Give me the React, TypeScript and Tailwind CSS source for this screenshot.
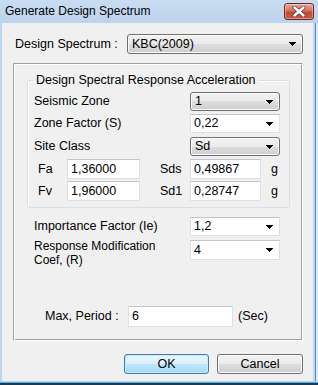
import React from 'react'

const ui = "font-['Liberation_Sans',Arial,sans-serif] text-[12.5px] text-black"

function Arrow() {
  return (
    <svg width="7" height="4" viewBox="0 0 7 4" className="shrink-0">
      <rect x="0" y="0" width="7" height="1" fill="#000" />
      <rect x="1" y="1" width="5" height="1" fill="#000" />
      <rect x="2" y="2" width="3" height="1" fill="#000" />
      <rect x="3" y="3" width="1" height="1" fill="#000" />
    </svg>
  )
}

// read-only drop list, drawn like a Win7 button
function DropList({ value, w, h = 19 }: { value: string; w: number; h?: number }) {
  return (
    <div
      style={{ width: w, height: h }}
      className="flex items-center justify-between pl-[4px] pr-[6px] border border-[#707070] rounded-[3px] bg-[linear-gradient(to_bottom,#f2f2f2,#ebebeb_50%,#dddddd_50%,#cfcfcf)] shadow-[inset_0_0_0_1px_#fcfcfc]"
    >
      <span className="leading-none">{value}</span>
      <Arrow />
    </div>
  )
}

// editable combo: white field with a bare arrow
function Combo({ value, w, h = 19 }: { value: string; w: number; h?: number }) {
  return (
    <div
      style={{ width: w, height: h }}
      className="flex items-center justify-between pl-[3px] pr-[6px] bg-white border border-[#dde1e6] border-t-[#c2c6cc]"
    >
      <span className="leading-none">{value}</span>
      <Arrow />
    </div>
  )
}

function Field({ value, w, h = 20 }: { value: string; w: number; h?: number }) {
  return (
    <div
      style={{ width: w, height: h }}
      className="flex items-center pl-[3px] bg-white border border-[#dde1e6] border-t-[#c2c6cc]"
    >
      <span className="leading-none">{value}</span>
    </div>
  )
}

function CloseButton() {
  return (
    <div className="mt-[3px] mr-[4px] w-[30px] h-[17px] rounded-[3px] border border-[#6d2a22] bg-[linear-gradient(to_bottom,#e7a99c,#d2715f_45%,#c24a33_55%,#c85a45)] shadow-[inset_0_0_0_1px_rgba(255,255,255,0.35)] flex items-center justify-center">
      <svg width="14" height="11" viewBox="0 0 14 11">
        <path d="M2.5 1.5 L11.5 9.5 M11.5 1.5 L2.5 9.5" stroke="#5a3a36" strokeWidth="4" strokeLinecap="round" />
        <path d="M2.5 1.5 L11.5 9.5 M11.5 1.5 L2.5 9.5" stroke="#ffffff" strokeWidth="2.4" strokeLinecap="round" />
      </svg>
    </div>
  )
}

function Button({ label, focused }: { label: string; focused?: boolean }) {
  return (
    <div
      className={
        focused
          ? 'w-[85px] h-[20px] flex items-center justify-center rounded-[3px] border border-[#3c7fb1] bg-[linear-gradient(to_bottom,#eaf6fd,#d9f0fc_50%,#bee6fd_50%,#a7d9f5)] shadow-[inset_0_0_0_1px_#c6e9fb]'
          : 'w-[86px] h-[20px] flex items-center justify-center rounded-[3px] border border-[#707070] bg-[linear-gradient(to_bottom,#f2f2f2,#ebebeb_50%,#dddddd_50%,#cfcfcf)] shadow-[inset_0_0_0_1px_#fcfcfc]'
      }
    >
      <span className="leading-none">{label}</span>
    </div>
  )
}

export default function App() {
  return (
    <div className={`${ui} w-[318px] h-[385px] flex flex-col bg-[#bfd5ee] overflow-hidden`}>
      {/* title bar */}
      <div className="h-[23px] flex items-start shrink-0 bg-[linear-gradient(to_bottom,#c9dcf1,#bcd3ec)]">
        <span className="pl-[5px] pt-[4px] text-[12px] leading-[14px]">Generate Design Spectrum</span>
        <div className="ml-auto">
          <CloseButton />
        </div>
      </div>

      <div className="flex-1 flex">
        {/* client area */}
        <div className="ml-[2px] w-[311px] bg-[#f0f0f0] flex flex-col">
          <div className="flex items-center pl-[13px] pt-[11px]">
            <span className="w-[112px]">Design Spectrum :</span>
            <DropList value="KBC(2009)" w={176} h={20} />
          </div>

          {/* outer etched frame */}
          <div className="mt-[9px] ml-[11px] w-[290px] border border-[#a0a0a0] border-r-white border-b-white shadow-[inset_1px_1px_0_#ffffff,inset_-1px_-1px_0_#a0a0a0] pl-[13px] pt-[16px] pb-[13px] flex flex-col">
            {/* inner group box */}
            <div className="relative w-[263px] border border-[#d5dfe5] rounded-[3px] shadow-[inset_1px_1px_0_#ffffff] pl-[6px] pt-[11px] pb-[6px] flex flex-col">
              <span className="absolute left-[6px] top-[-9px] px-[2px] bg-[#f0f0f0] leading-[16px]">
                Design Spectral Response Acceleration
              </span>
              <div className="flex items-center">
                <span className="w-[156px]">Seismic Zone</span>
                <DropList value="1" w={90} />
              </div>
              <div className="flex items-center mt-[3px]">
                <span className="w-[156px]">Zone Factor (S)</span>
                <Combo value="0,22" w={90} />
              </div>
              <div className="flex items-center mt-[4px]">
                <span className="w-[156px]">Site Class</span>
                <DropList value="Sd" w={90} />
              </div>
              <div className="flex items-center mt-[3px] pl-[4px]">
                <span className="w-[29px]">Fa</span>
                <Field value="1,36000" w={73} />
                <span className="ml-[20px] w-[30px]">Sds</span>
                <Field value="0,49867" w={71} />
                <span className="ml-[10px]">g</span>
              </div>
              <div className="flex items-center mt-[2px] pl-[4px]">
                <span className="w-[29px]">Fv</span>
                <Field value="1,96000" w={73} />
                <span className="ml-[20px] w-[30px]">Sd1</span>
                <Field value="0,28747" w={71} />
                <span className="ml-[10px]">g</span>
              </div>
            </div>

            <div className="flex items-center mt-[9px] pl-[7px]">
              <span className="w-[156px]">Importance Factor (Ie)</span>
              <Combo value="1,2" w={90} />
            </div>
            <div className="flex items-start mt-[4px] pl-[7px]">
              <div className="w-[156px] flex flex-col -mt-[1px] text-[12px]">
                <span className="leading-[14px]">Response Modification</span>
                <span className="leading-[14px]">Coef, (R)</span>
              </div>
              <Combo value="4" w={90} h={20} />
            </div>

            <div className="flex items-center mt-[39px] pl-[18px]">
              <span className="w-[83px]">Max, Period :</span>
              <Field value="6" w={105} h={21} />
              <span className="ml-[5px]">(Sec)</span>
            </div>
          </div>

          <div className="flex justify-end gap-[8px] pr-[10px] mt-[13px]">
            <Button label="OK" focused />
            <Button label="Cancel" />
          </div>
        </div>

        {/* right frame edge */}
        <div className="flex-1 flex">
          <div className="w-[2px] bg-[#bfd5ee]" />
          <div className="w-[1px] bg-[#4a90d0]" />
          <div className="flex-1 bg-[#dbe8f6]" />
        </div>
      </div>

      {/* bottom frame edge */}
      <div className="h-[4px] shrink-0 flex flex-col">
        <div className="h-[1px] bg-[#bfd5ee]" />
        <div className="h-[1px] bg-[#4fb3dd]" />
        <div className="h-[2px] bg-[#1d3a55]" />
      </div>
    </div>
  )
}
